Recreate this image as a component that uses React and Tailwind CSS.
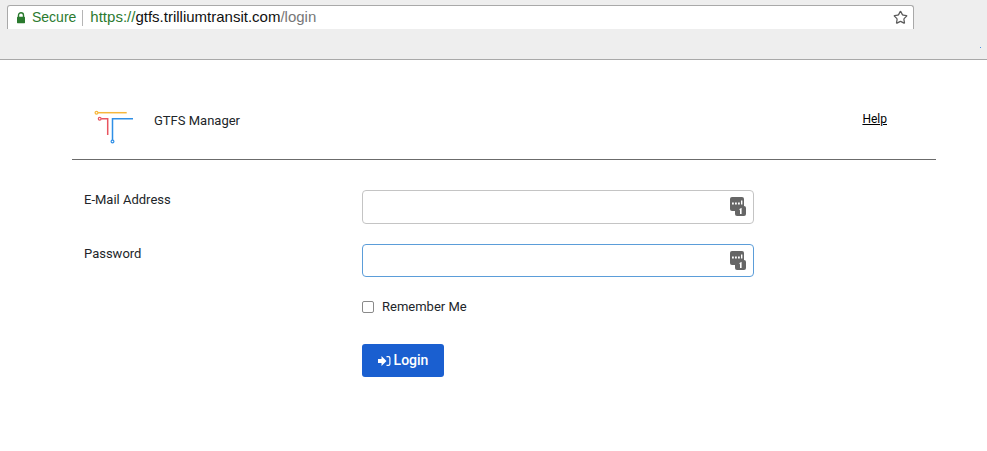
import React from 'react';
import { Star } from 'lucide-react';

const KeyIcon = () => (
  <svg width="17" height="19" viewBox="0 0 17 19" className="absolute right-[7px] top-[7px]">
    <rect x="0" y="0" width="14" height="14" rx="2" fill="#666666" />
    <rect x="2" y="5.5" width="1.8" height="2" fill="#fff" />
    <rect x="5" y="5.5" width="1.8" height="2" fill="#fff" />
    <rect x="8" y="5.5" width="1.8" height="2" fill="#fff" />
    <rect x="11" y="3.5" width="1.4" height="4" fill="#fff" />
    <rect x="5" y="9" width="11" height="10" rx="2" fill="#666666" />
    <path d="M9.5 12 L11.6 10.8 V17 H10 V12.9 L9.5 13.2 Z" fill="#fff" />
  </svg>
);

const LockIcon = () => (
  <svg width="10" height="12" viewBox="0 0 10 12" fill="none">
    <path d="M2.5 5V3.2a2.5 2.5 0 0 1 5 0V5" stroke="#2a7a2e" strokeWidth="1.4" />
    <rect x="1" y="4.8" width="8" height="6.4" rx="0.6" fill="#2a7a2e" />
  </svg>
);

const Logo = () => (
  <svg width="44" height="36" viewBox="0 0 44 36" fill="none" strokeWidth="1.5">
    <path d="M4 3.7H32.7" stroke="#f6b73c" />
    <circle cx="2.5" cy="3.7" r="1.4" stroke="#f6b73c" strokeWidth="1.2" />
    <path d="M7.2 9.7H13.7V26" stroke="#e8555f" />
    <circle cx="5.7" cy="9.7" r="1.4" stroke="#e8555f" strokeWidth="1.2" />
    <path d="M39 9.7H18.5V31" stroke="#2f8fe6" />
    <circle cx="18.5" cy="32.5" r="1.4" stroke="#2f8fe6" strokeWidth="1.2" />
  </svg>
);

const Field = ({ label, focused }) => (
  <div className="flex">
    <label className="w-[290px] pl-3 pt-[1px] text-[13px] leading-[18px] text-[#212529]">{label}</label>
    <div className="relative w-[392px]">
      <input
        type="text"
        className={
          focused
            ? 'block h-[33px] w-full rounded border border-[#5b9dd9] bg-white outline-none'
            : 'block h-[34px] w-full rounded border border-[#c4c4c4] bg-white outline-none'
        }
      />
      <KeyIcon />
    </div>
  </div>
);

export default function App() {
  return (
    <div className="min-h-[451px] bg-white font-['Roboto',sans-serif]">
      {/* browser toolbar */}
      <div className="relative h-[60px] border-b border-[#a8a8a8] bg-[#eeeeee] pt-[5px] pl-[7px] font-['Liberation_Sans',sans-serif]">
        <div className="flex h-[24px] w-[907px] items-center rounded-t-[3px] border-x border-t border-[#a9a9a9] bg-white pl-[8px] pr-[5px] text-[15px]">
          <LockIcon />
          <span className="ml-[6px] text-[14px] text-[#2b7a2f]">Secure</span>
          <span className="ml-[6px] mr-[7px] h-[16px] w-px bg-[#b5b5b5]" />
          <span className="text-[#2b7a2f]">https://</span>
          <span className="text-[#111111]">gtfs.trilliumtransit.com</span>
          <span className="text-[#777777]">/login</span>
          <Star size={15} className="ml-auto text-[#5a5a5a]" strokeWidth={2} />
        </div>
        <span className="absolute left-[980px] top-[47px] h-px w-px bg-[#4a90e2]" />
      </div>

      <div className="ml-[72px] w-[864px]">
        {/* header */}
        <div className="flex h-[100px] items-start border-b border-[#6b6b6b] pt-[49px]">
          <div className="ml-[22px] flex items-start">
            <Logo />
            <span className="ml-[16px] mt-[2px] text-[13px] leading-[20px] text-[#212529]">GTFS Manager</span>
          </div>
          <a href="#" className="ml-auto mr-[49px] mt-[1px] text-[12px] leading-[18px] text-black underline">Help</a>
        </div>

        {/* form */}
        <div className="flex flex-col pt-[30px]">
          <Field label="E-Mail Address" />
          <div className="mt-[20px]">
            <Field label="Password" focused />
          </div>
          <label className="ml-[290px] mt-[22px] flex h-[16px] items-center text-[13px] text-[#212529]">
            <span className="h-[12px] w-[12px] rounded-[2px] border border-[#8a8a8a] bg-white" />
            <span className="ml-[8px]">Remember Me</span>
          </label>
          <button className="ml-[290px] mt-[29px] flex h-[33px] w-[82px] items-center justify-center gap-[3px] rounded-[3px] bg-[#1a5fd0] text-[14px] font-medium text-white">
            <svg width="13" height="12" viewBox="0 0 13 12" fill="#fff">
              <path d="M0 4H3.5V1L8.5 6L3.5 11V8H0Z" />
              <path d="M8.5 1H10.5A2 2 0 0 1 12.5 3V9A2 2 0 0 1 10.5 11H8.5V9.8H10.3A1 1 0 0 0 11.3 8.8V3.2A1 1 0 0 0 10.3 2.2H8.5Z" />
            </svg>
            Login
          </button>
        </div>
      </div>
    </div>
  );
}
